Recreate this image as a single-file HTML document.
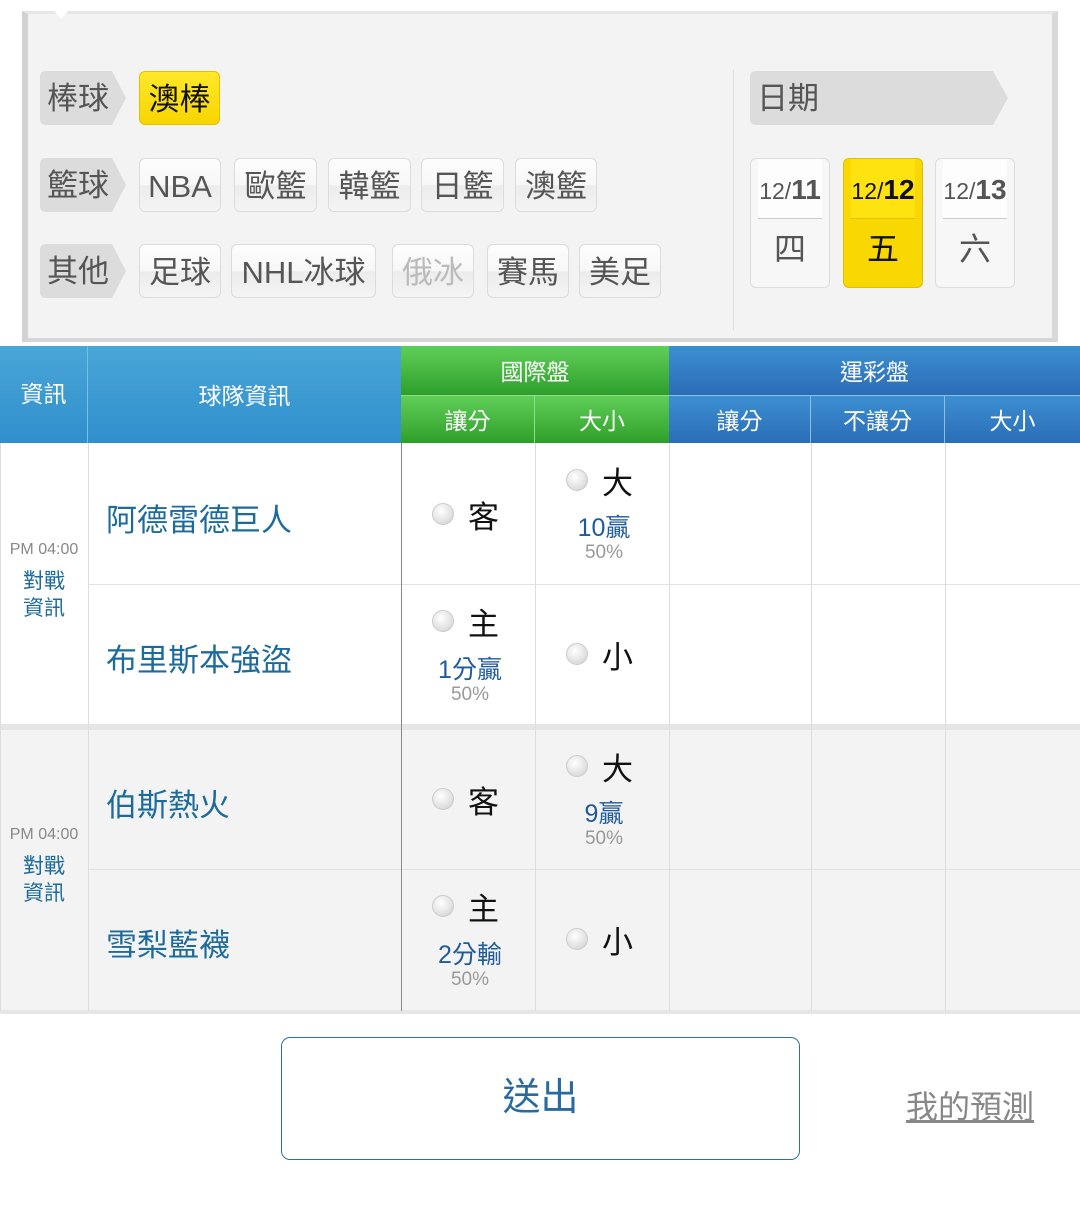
<!DOCTYPE html>
<html><head><meta charset="utf-8">
<style>
*{margin:0;padding:0;box-sizing:border-box}
body{width:1080px;height:1212px;background:#fff;font-family:"Liberation Sans","Noto Sans CJK TC",sans-serif;position:relative;overflow:hidden}
.a{position:absolute}
.panel{left:22px;top:11px;width:1036px;height:331px;background:#f3f3f3;border:1px solid #ddd;border-left:6px solid #d2d2d2;border-right:6px solid #d9d9d9;border-top:3px solid #e6e6e6;border-bottom:4px solid #d6d6d6}
.lab{height:54px;width:86px;font-size:31px;color:#555;line-height:56px;padding-left:7px}
.lab svg{position:absolute;left:0;top:0}
.lab span{position:relative}
.chip{height:54px;background:linear-gradient(#fdfdfd 0%,#f7f7f7 50%,#ececec 51%,#f4f4f4 100%);border:1px solid #dcdcdc;border-radius:6px;font-size:31px;color:#555;line-height:56px;text-align:center}
.date{width:80px;height:130px;border:1px solid #ddd;border-radius:6px;background:#f7f7f7;text-align:center;overflow:hidden}
.date .t{height:60px;background:#fdfdfd;font-size:23px;color:#555;line-height:62px;border-bottom:1px solid #ccc;margin:0 7px}
.date .t b{font-size:28px}
.date .d{font-size:32px;line-height:60px;color:#555}
.hb{background:linear-gradient(#4aa6d8,#2f8fcc);color:#fff;text-align:center;font-size:23px}
.hg{background:linear-gradient(#5fcf5a,#2f9f2b);color:#fff;text-align:center;font-size:23px}
.hd{background:linear-gradient(#3d8fd2,#2a6db6);color:#fff;text-align:center;font-size:23px}
.vl{width:1px;background:#ddd}
.hl{height:1px;background:#e3e3e3}
.team{font-size:31px;color:#1c6b9b}
.r{width:22px;height:22px;border-radius:50%;background:radial-gradient(circle at 40% 35%,#fff,#ddd 70%,#bbb);border:1px solid #ccc}
.k{font-size:31px;color:#111}
.b{font-size:25px;color:#1f5a9a;text-align:center;width:134px}
.p{font-size:19px;color:#999;text-align:center;width:134px}
.time{font-size:16px;color:#888;width:88px;text-align:center}
.vs{font-size:21px;color:#1c6b9b;width:88px;text-align:center;line-height:27px}
</style></head><body>
<div class="a panel"></div>
<div class="a" style="left:54px;top:11px;width:14px;height:8px;background:#fff;clip-path:polygon(0 0,100% 0,50% 100%)"></div>

<div class="a lab" style="left:40px;top:71px"><svg width="88" height="54"><path d="M6 0H72L86 27L72 54H6Q0 54 0 48V6Q0 0 6 0Z" fill="#dcdcdc"/></svg><span>棒球</span></div>
<div class="a lab" style="left:40px;top:158px"><svg width="88" height="54"><path d="M6 0H72L86 27L72 54H6Q0 54 0 48V6Q0 0 6 0Z" fill="#dcdcdc"/></svg><span>籃球</span></div>
<div class="a lab" style="left:40px;top:244px"><svg width="88" height="54"><path d="M6 0H72L86 27L72 54H6Q0 54 0 48V6Q0 0 6 0Z" fill="#dcdcdc"/></svg><span>其他</span></div>

<div class="a chip" style="left:139px;top:71px;width:81px;background:linear-gradient(#ffe82a,#f7d500);border-color:#e3c000;color:#111">澳棒</div>

<div class="a chip" style="left:139px;top:158px;width:82px">NBA</div>
<div class="a chip" style="left:234px;top:158px;width:83px">歐籃</div>
<div class="a chip" style="left:328px;top:158px;width:83px">韓籃</div>
<div class="a chip" style="left:421px;top:158px;width:83px">日籃</div>
<div class="a chip" style="left:515px;top:158px;width:82px">澳籃</div>

<div class="a chip" style="left:139px;top:244px;width:82px">足球</div>
<div class="a chip" style="left:231px;top:244px;width:145px">NHL冰球</div>
<div class="a chip" style="left:392px;top:244px;width:82px;color:#bbb">俄冰</div>
<div class="a chip" style="left:487px;top:244px;width:82px">賽馬</div>
<div class="a chip" style="left:579px;top:244px;width:82px">美足</div>

<div class="a" style="left:733px;top:70px;width:1px;height:260px;background:#ddd"></div>
<div class="a lab" style="left:750px;top:71px;width:260px"><svg width="260" height="54"><path d="M6 0H243L258 27L243 54H6Q0 54 0 48V6Q0 0 6 0Z" fill="#dcdcdc"/></svg><span>日期</span></div>

<div class="a date" style="left:750px;top:158px"><div class="t">12/<b>11</b></div><div class="d">四</div></div>
<div class="a date" style="left:843px;top:158px;background:#f8d800;border-color:#e0bf00"><div class="t" style="background:#ffe310;color:#111;border-color:#e0c000">12/<b>12</b></div><div class="d" style="color:#111">五</div></div>
<div class="a date" style="left:935px;top:158px"><div class="t">12/<b>13</b></div><div class="d">六</div></div>

<div class="a hb" style="left:0;top:346px;width:88px;height:97px;line-height:97px;border-right:1px solid #7bbfe6">資訊</div>
<div class="a hb" style="left:88px;top:346px;width:313px;height:97px;line-height:100px">球隊資訊</div>
<div class="a hg" style="left:401px;top:346px;width:268px;height:50px;line-height:52px;border-bottom:1px solid #8fdc8b">國際盤</div>
<div class="a hg" style="left:401px;top:396px;width:134px;height:47px;line-height:50px;border-right:1px solid #8fdc8b">讓分</div>
<div class="a hg" style="left:535px;top:396px;width:134px;height:47px;line-height:50px">大小</div>
<div class="a hd" style="left:669px;top:346px;width:411px;height:50px;line-height:52px;border-bottom:1px solid #8cbfe8">運彩盤</div>
<div class="a hd" style="left:669px;top:396px;width:142px;height:47px;line-height:50px;border-right:1px solid #8cbfe8">讓分</div>
<div class="a hd" style="left:811px;top:396px;width:134px;height:47px;line-height:50px;border-right:1px solid #8cbfe8">不讓分</div>
<div class="a hd" style="left:945px;top:396px;width:135px;height:47px;line-height:50px">大小</div>

<div class="a" style="left:0;top:443px;width:1080px;height:282px;background:#fff"></div>
<div class="a" style="left:0;top:724px;width:1080px;height:6px;background:#e6e6e6"></div>
<div class="a" style="left:0;top:730px;width:1080px;height:281px;background:#f3f3f3"></div>
<div class="a" style="left:0;top:1010px;width:1080px;height:4px;background:#e6e6e6"></div>
<div class="a hl" style="left:88px;top:584px;width:992px"></div>
<div class="a hl" style="left:88px;top:869px;width:992px"></div>
<div class="a vl" style="left:0;top:443px;height:568px"></div>
<div class="a vl" style="left:88px;top:443px;height:568px"></div>
<div class="a vl" style="left:401px;top:443px;height:568px;background:#888"></div>
<div class="a vl" style="left:535px;top:443px;height:568px"></div>
<div class="a vl" style="left:669px;top:443px;height:568px"></div>
<div class="a vl" style="left:811px;top:443px;height:568px"></div>
<div class="a vl" style="left:945px;top:443px;height:568px"></div>

<div class="a time" style="top:541px">PM 04:00</div>
<div class="a vs" style="top:568px">對戰<br>資訊</div>
<div class="a team" style="left:106px;top:495px">阿德雷德巨人</div>
<div class="a team" style="left:106px;top:635px">布里斯本強盜</div>

<div class="a r" style="left:432px;top:503px"></div><div class="a k" style="left:468px;top:492px">客</div>
<div class="a r" style="left:566px;top:469px"></div><div class="a k" style="left:602px;top:458px">大</div>
<div class="a b" style="left:537px;top:508px">10贏</div>
<div class="a p" style="left:537px;top:542px">50%</div>

<div class="a r" style="left:432px;top:610px"></div><div class="a k" style="left:468px;top:599px">主</div>
<div class="a b" style="left:403px;top:650px">1分贏</div>
<div class="a p" style="left:403px;top:684px">50%</div>
<div class="a r" style="left:566px;top:643px"></div><div class="a k" style="left:602px;top:632px">小</div>

<div class="a time" style="top:826px">PM 04:00</div>
<div class="a vs" style="top:853px">對戰<br>資訊</div>
<div class="a team" style="left:106px;top:780px">伯斯熱火</div>
<div class="a team" style="left:106px;top:920px">雪梨藍襪</div>

<div class="a r" style="left:432px;top:788px"></div><div class="a k" style="left:468px;top:777px">客</div>
<div class="a r" style="left:566px;top:755px"></div><div class="a k" style="left:602px;top:744px">大</div>
<div class="a b" style="left:537px;top:794px">9贏</div>
<div class="a p" style="left:537px;top:828px">50%</div>

<div class="a r" style="left:432px;top:895px"></div><div class="a k" style="left:468px;top:884px">主</div>
<div class="a b" style="left:403px;top:935px">2分輸</div>
<div class="a p" style="left:403px;top:969px">50%</div>
<div class="a r" style="left:566px;top:928px"></div><div class="a k" style="left:602px;top:917px">小</div>

<div class="a" style="left:281px;top:1037px;width:519px;height:123px;border:1px solid #2c6fa2;border-radius:9px;text-align:center;line-height:120px;font-size:38px;color:#2a6aa0">送出</div>
<div class="a" style="left:906px;top:1082px;font-size:32px;color:#888;text-decoration:underline">我的預測</div>
</body></html>
